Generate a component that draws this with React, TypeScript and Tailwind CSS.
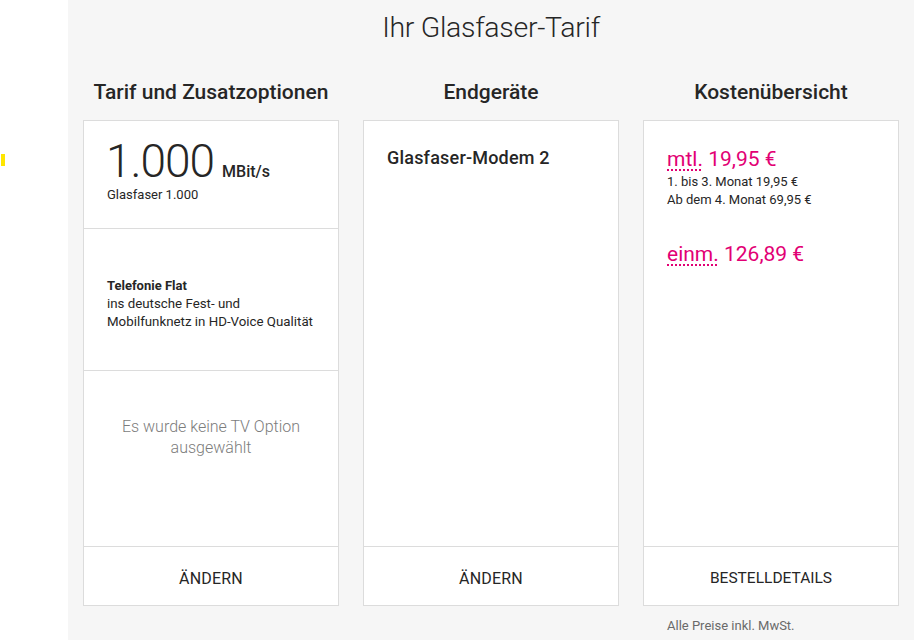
import React from "react";

const font = { fontFamily: "Roboto, 'Noto Sans', sans-serif" };

export default function App() {
  return (
    <div className="flex w-[914px] h-[640px] overflow-hidden bg-white text-[#262626]" style={font}>
      <div className="w-[68px] shrink-0 bg-white relative">
        <div className="absolute left-[1px] top-[154px] w-[4px] h-[12px] bg-[#ffe600]" />
      </div>
      <div className="flex-1 bg-[#f6f6f6] px-[15px] flex flex-col">
        <h1 className="h-[56px] pt-[10px] text-center text-[28.5px] leading-[36px] font-light tracking-[-0.3px] text-[#262626]">
          Ihr Glasfaser-Tarif
        </h1>
        <div className="grid grid-cols-3 gap-x-[24px] mt-[21px]">
          <h2 className="h-[43px] pt-[1px] text-center text-[21px] leading-[28px] font-medium">Tarif und Zusatzoptionen</h2>
          <h2 className="h-[43px] pt-[1px] text-center text-[21px] leading-[28px] font-medium">Endgeräte</h2>
          <h2 className="h-[43px] pt-[1px] text-center text-[21px] leading-[28px] font-medium">Kostenübersicht</h2>

          {/* Card 1 */}
          <div className="h-[486px] bg-white border border-[#dcdcdc] flex flex-col">
            <div className="h-[108px] border-b border-[#dcdcdc] px-[22px] pt-[15px]">
              <div className="flex items-baseline gap-[8px]">
                <span className="text-[46px] leading-[50px] font-light tracking-[-1px]">1.000</span>
                <span className="text-[16px] font-medium">MBit/s</span>
              </div>
              <div className="text-[13px] leading-[18px] pl-[1px] text-[#262626]">Glasfaser 1.000</div>
            </div>
            <div className="h-[142px] border-b border-[#dcdcdc] px-[23px] flex flex-col justify-center pt-[8px] whitespace-nowrap">
              <div className="text-[13px] leading-[18px] font-bold">Telefonie Flat</div>
              <div className="text-[13.3px] leading-[18px]">ins deutsche Fest- und</div>
              <div className="text-[13.3px] leading-[18px]">Mobilfunknetz in HD-Voice Qualität</div>
            </div>
            <div className="h-[176px] border-b border-[#dcdcdc] px-[23px] pt-[45px] text-center text-[16px] leading-[21px] font-light text-[#7c7c7c]">
              Es wurde keine TV Option
              <br />
              ausgewählt
            </div>
            <div className="flex-1 flex items-center justify-center pt-[5px] text-[16px] tracking-[0.2px]">ÄNDERN</div>
          </div>

          {/* Card 2 */}
          <div className="h-[486px] bg-white border border-[#dcdcdc] flex flex-col">
            <div className="h-[426px] border-b border-[#dcdcdc] px-[23px] pt-[26px]">
              <div className="text-[18px] leading-[22px] font-medium tracking-[0.2px]">Glasfaser-Modem 2</div>
            </div>
            <div className="flex-1 flex items-center justify-center pt-[5px] text-[16px] tracking-[0.2px]">ÄNDERN</div>
          </div>

          {/* Card 3 */}
          <div className="h-[486px] bg-white border border-[#dcdcdc] flex flex-col">
            <div className="h-[426px] border-b border-[#dcdcdc] px-[23px] pt-[25px]">
              <div className="text-[21px] leading-[26px] text-[#e20074]">
                <span className="underline decoration-dotted decoration-2 underline-offset-[3px]">mtl.</span> 19,95 €
              </div>
              <div className="text-[13px] leading-[18px] mt-[1px]">1. bis 3. Monat 19,95 €</div>
              <div className="text-[13px] leading-[18px]">Ab dem 4. Monat 69,95 €</div>
              <div className="text-[21px] leading-[26px] text-[#e20074] mt-[32px]">
                <span className="underline decoration-dotted decoration-2 underline-offset-[3px]">einm.</span> 126,89 €
              </div>
            </div>
            <div className="flex-1 flex items-center justify-center pt-[5px] text-[15.5px]">BESTELLDETAILS</div>
          </div>

          <div />
          <div />
          <div className="pt-[11px] px-[24px] text-[13px] leading-[18px] text-[#6a6a6a]">Alle Preise inkl. MwSt.</div>
        </div>
      </div>
    </div>
  );
}
